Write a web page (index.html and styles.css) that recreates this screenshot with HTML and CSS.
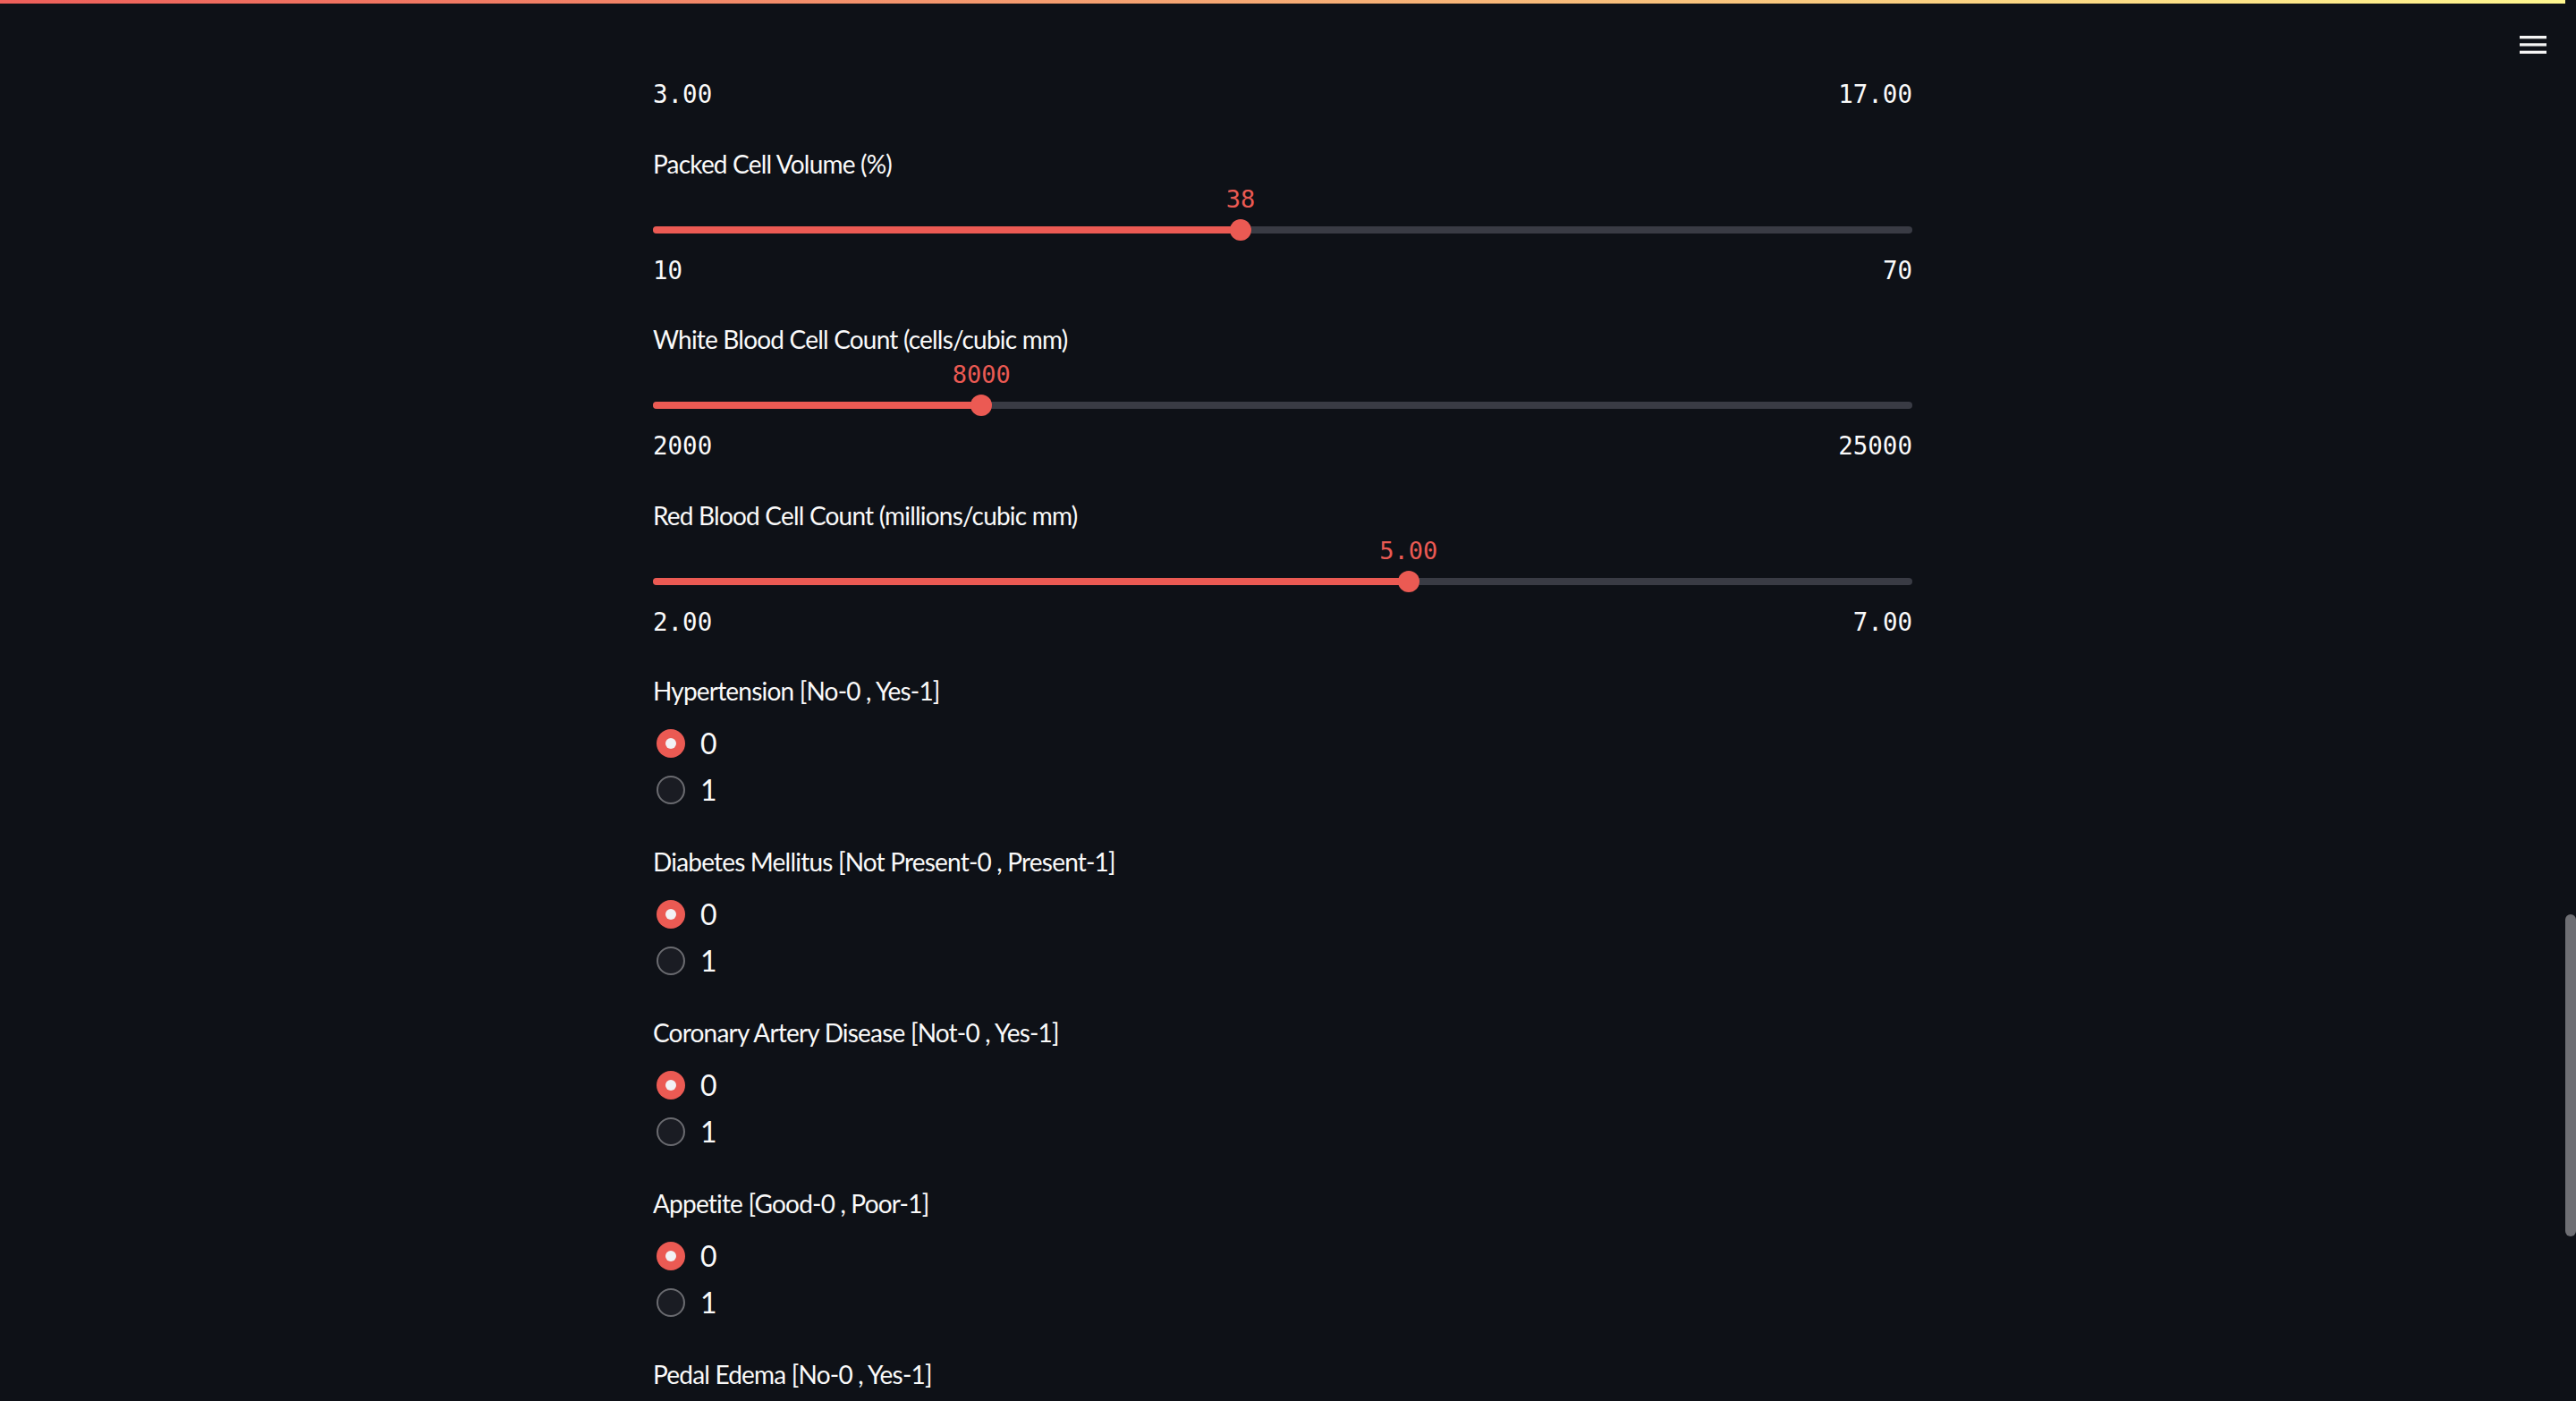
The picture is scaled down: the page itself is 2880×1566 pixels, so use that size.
FILE: index.html
```html
<!DOCTYPE html>
<html lang="en">
<head>
<meta charset="utf-8">
<title>Chronic Kidney Disease Prediction</title>
<link rel="stylesheet" href="styles.css">
</head>
<body>
<div class="app">
  <div class="main">
    <header class="header">
      <div class="decoration"></div>
      <div class="toolbar">
        <button class="menu" aria-label="Main menu">
          <svg width="30" height="20" viewBox="0 0 30 20" aria-hidden="true">
            <rect x="0" y="0" width="30" height="3.3" fill="#f5f5f5"/>
            <rect x="0" y="8.3" width="30" height="3.3" fill="#f5f5f5"/>
            <rect x="0" y="16.7" width="30" height="3.3" fill="#f5f5f5"/>
          </svg>
        </button>
      </div>
    </header>

    <section class="block">
      <div class="slider first">
        <div class="track-wrap">
          <div class="track">
            <div class="fill" style="width:64.29%"></div>
            <div class="thumb" style="left:64.29%"></div>
          </div>
        </div>
        <div class="ticks"><span>3.00</span><span>17.00</span></div>
      </div>

      <div class="slider">
        <div class="label">Packed Cell Volume (%)</div>
        <div class="track-wrap">
          <div class="track">
            <div class="fill" style="width:46.67%"></div>
            <div class="thumb" style="left:46.67%"><span class="value">38</span></div>
          </div>
        </div>
        <div class="ticks"><span>10</span><span>70</span></div>
      </div>

      <div class="slider">
        <div class="label">White Blood Cell Count (cells/cubic mm)</div>
        <div class="track-wrap">
          <div class="track">
            <div class="fill" style="width:26.09%"></div>
            <div class="thumb" style="left:26.09%"><span class="value">8000</span></div>
          </div>
        </div>
        <div class="ticks"><span>2000</span><span>25000</span></div>
      </div>

      <div class="slider">
        <div class="label">Red Blood Cell Count (millions/cubic mm)</div>
        <div class="track-wrap">
          <div class="track">
            <div class="fill" style="width:60%"></div>
            <div class="thumb" style="left:60%"><span class="value">5.00</span></div>
          </div>
        </div>
        <div class="ticks"><span>2.00</span><span>7.00</span></div>
      </div>

      <div class="radio-group">
        <div class="label">Hypertension [No-0 , Yes-1]</div>
        <div class="options">
          <div class="option"><span class="dot checked"></span><span class="opt-text">0</span></div>
          <div class="option"><span class="dot"></span><span class="opt-text">1</span></div>
        </div>
      </div>

      <div class="radio-group">
        <div class="label">Diabetes Mellitus [Not Present-0 , Present-1]</div>
        <div class="options">
          <div class="option"><span class="dot checked"></span><span class="opt-text">0</span></div>
          <div class="option"><span class="dot"></span><span class="opt-text">1</span></div>
        </div>
      </div>

      <div class="radio-group">
        <div class="label">Coronary Artery Disease [Not-0 , Yes-1]</div>
        <div class="options">
          <div class="option"><span class="dot checked"></span><span class="opt-text">0</span></div>
          <div class="option"><span class="dot"></span><span class="opt-text">1</span></div>
        </div>
      </div>

      <div class="radio-group">
        <div class="label">Appetite [Good-0 , Poor-1]</div>
        <div class="options">
          <div class="option"><span class="dot checked"></span><span class="opt-text">0</span></div>
          <div class="option"><span class="dot"></span><span class="opt-text">1</span></div>
        </div>
      </div>

      <div class="radio-group">
        <div class="label">Pedal Edema [No-0 , Yes-1]</div>
      </div>
    </section>
  </div>
  <aside class="scrollbar"><div class="scroll-thumb"></div></aside>
</div>
</body>
</html>
```

FILE: styles.css
```css
html, body {
  margin: 0;
  padding: 0;
  height: 100%;
  background: #0e1117;
  overflow: hidden;
}

.app {
  display: flex;
  height: 100vh;
}

.main {
  flex: 1;
  position: relative;
  overflow: hidden;
}

.header {
  position: absolute;
  top: 0;
  left: 0;
  right: 0;
  height: 92px;
  background: #0e1117;
  z-index: 10;
}

.decoration {
  height: 4px;
  background: linear-gradient(90deg, #ee5f5a, #fff78f);
}

.toolbar {
  display: flex;
  justify-content: flex-end;
  padding: 36px 21px 0 0;
}

.menu {
  border: 0;
  padding: 0;
  margin: 0;
  background: transparent;
  display: flex;
  width: 30px;
  height: 20px;
}

.block {
  width: 1408px;
  margin: 0 auto;
  display: flex;
  flex-direction: column;
  font-family: Lato, "Noto Sans", sans-serif;
  color: #fafafa;
}

.label {
  height: 48px;
  line-height: 48px;
  font-size: 28px;
  letter-spacing: -0.8px;
  white-space: nowrap;
}

/* slider */
.slider {
  padding-bottom: 32.5px;
}

.slider.first {
  margin-top: 10px;
}

.track-wrap {
  height: 74px;
  padding-top: 46px;
  box-sizing: border-box;
}

.track {
  position: relative;
  height: 8px;
  border-radius: 4px;
  background: #393b44;
}

.fill {
  height: 8px;
  border-radius: 4px;
  background: #eb5a53;
}

.thumb {
  position: absolute;
  top: -8px;
  width: 24px;
  height: 24px;
  margin-left: -12px;
  border-radius: 50%;
  background: #eb5a53;
}

.value {
  position: absolute;
  bottom: 26px;
  left: 50%;
  transform: translateX(-50%);
  height: 40px;
  line-height: 40px;
  font-family: "DejaVu Sans Mono", "Liberation Mono", monospace;
  font-size: 27px;
  color: #eb5a53;
  white-space: nowrap;
}

.ticks {
  height: 42px;
  line-height: 42px;
  display: flex;
  justify-content: space-between;
  font-family: "DejaVu Sans Mono", "Liberation Mono", monospace;
  font-size: 27.5px;
  color: #fafafa;
}

/* radio */
.radio-group {
  padding-bottom: 30px;
}

.options {
  margin-top: 9px;
  display: flex;
  flex-direction: column;
}

.option {
  height: 52px;
  display: flex;
  align-items: center;
  padding-left: 4px;
}

.dot {
  width: 32px;
  height: 32px;
  box-sizing: border-box;
  border-radius: 50%;
  border: 2px solid #6a6b70;
  background: #1a1c23;
  display: flex;
  align-items: center;
  justify-content: center;
  flex: none;
}

.dot.checked {
  border: 0;
  background: #eb5a53;
}

.dot.checked::after {
  content: "";
  width: 12px;
  height: 12px;
  border-radius: 50%;
  background: #f2f2f5;
}

.opt-text {
  margin-left: 17px;
  font-size: 32px;
  line-height: 52px;
}

/* scrollbar */
.scrollbar {
  width: 12px;
  flex: none;
}

.scroll-thumb {
  margin-top: 1022px;
  height: 360px;
  border-radius: 6px;
  background: #6e6f74;
}
```
